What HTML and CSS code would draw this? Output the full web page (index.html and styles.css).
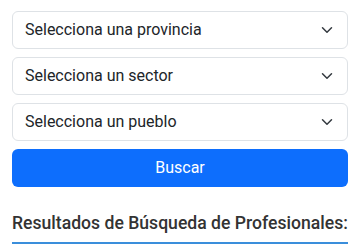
FILE: index.html
```html
<!DOCTYPE html>
<html lang="es">
<head>
<meta charset="utf-8">
<link rel="stylesheet" href="styles.css">
</head>
<body>
<div class="container">
  <form class="search">
    <div class="select"><span>Selecciona una provincia</span><svg class="chev" viewBox="0 0 16 16" width="12" height="12"><path d="m2 5 6 6 6-6" fill="none" stroke="#343a40" stroke-width="2" stroke-linecap="round" stroke-linejoin="round"/></svg></div>
    <div class="select"><span>Selecciona un sector</span><svg class="chev" viewBox="0 0 16 16" width="12" height="12"><path d="m2 5 6 6 6-6" fill="none" stroke="#343a40" stroke-width="2" stroke-linecap="round" stroke-linejoin="round"/></svg></div>
    <div class="select"><span>Selecciona un pueblo</span><svg class="chev" viewBox="0 0 16 16" width="12" height="12"><path d="m2 5 6 6 6-6" fill="none" stroke="#343a40" stroke-width="2" stroke-linecap="round" stroke-linejoin="round"/></svg></div>
    <button type="button" class="btn">Buscar</button>
  </form>
  <h3 class="results-title">Resultados de Búsqueda de Profesionales:</h3>
</div>
</body>
</html>
```
FILE: styles.css
```css
* { box-sizing: border-box; }
html, body { margin: 0; padding: 0; background: #fff; }
body {
  font-family: Roboto, "Noto Sans", sans-serif;
  color: #212529;
}
.container {
  padding: 11px 12px 0 12px;
}
.search {
  display: flex;
  flex-direction: column;
  gap: 8px;
}
.select {
  height: 38px;
  border: 1px solid #dee2e6;
  border-radius: 6px;
  padding: 0 14px 0 12px;
  display: flex;
  align-items: center;
  justify-content: space-between;
  font-size: 16px;
  line-height: 24px;
  color: #212529;
  background: #fff;
}
.chev { display: block; }
.btn {
  height: 38px;
  border: 0;
  border-radius: 6px;
  background: #0d6efd;
  color: #fff;
  font-family: inherit;
  font-size: 16px;
  line-height: 24px;
  width: 100%;
}
.results-title {
  margin: 24px 0 0 0;
  padding-bottom: 7px;
  border-bottom: 2px solid #3a8edb;
  font-size: 17.6px;
  font-weight: 500;
  line-height: 24px;
  color: #333;
  white-space: nowrap;
}
```
